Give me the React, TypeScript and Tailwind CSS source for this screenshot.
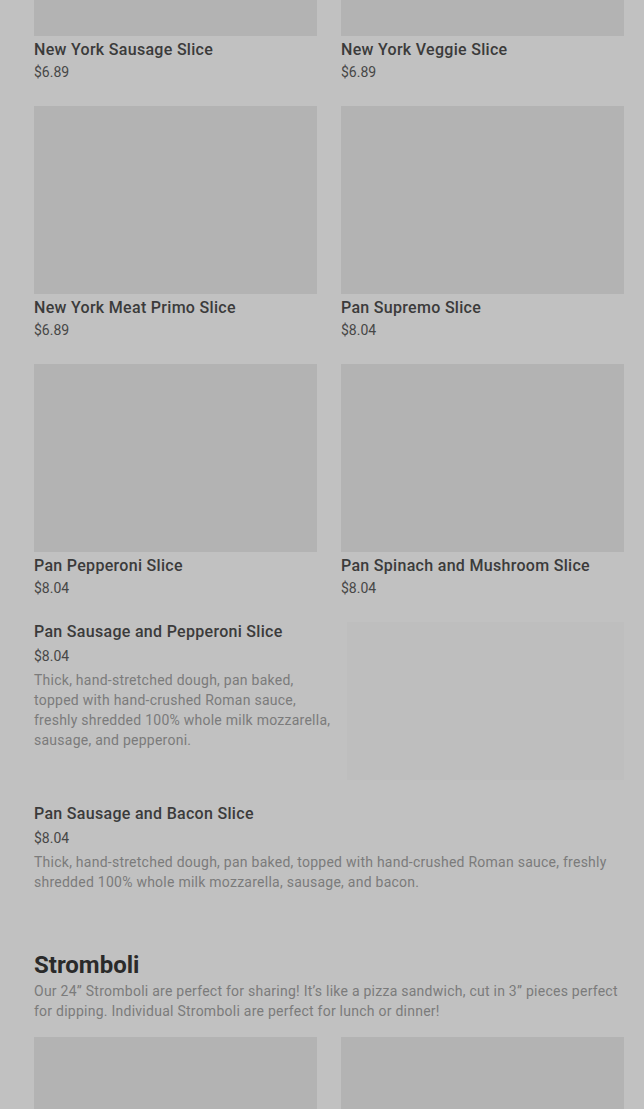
const font = { fontFamily: "Roboto, 'Liberation Sans', sans-serif" };

type Item = { name: string; price: string };

const rows: { items: Item[]; cut?: boolean }[] = [
  {
    cut: true,
    items: [
      { name: "New York Sausage Slice", price: "$6.89" },
      { name: "New York Veggie Slice", price: "$6.89" },
    ],
  },
  {
    items: [
      { name: "New York Meat Primo Slice", price: "$6.89" },
      { name: "Pan Supremo Slice", price: "$8.04" },
    ],
  },
  {
    items: [
      { name: "Pan Pepperoni Slice", price: "$8.04" },
      { name: "Pan Spinach and Mushroom Slice", price: "$8.04" },
    ],
  },
];

function GridCard({ item, cut }: { item: Item; cut?: boolean }) {
  return (
    <div className="flex flex-col">
      <div className={`w-full bg-[#b3b3b3] ${cut ? "h-[36px]" : "h-[188px]"}`} />
      <div className="mt-[2px] text-[16px] font-medium leading-6 tracking-[0.3px] text-[#3b3b3b]">{item.name}</div>
      <div className="text-[14px] leading-5 text-[#474747]">{item.price}</div>
    </div>
  );
}

function ListItem({
  name,
  price,
  desc,
  image,
}: {
  name: string;
  price: string;
  desc: string;
  image?: boolean;
}) {
  return (
    <div className="flex gap-[10px]">
      <div className="flex-1">
        <div className="text-[16px] font-medium leading-6 tracking-[0.3px] text-[#3b3b3b]">{name}</div>
        <div className="mt-[2px] text-[14px] leading-5 text-[#474747]">{price}</div>
        <div className="mt-1 text-[14px] leading-5 tracking-[0.25px] text-[#7b7b7b]">{desc}</div>
      </div>
      {image && <div className="mt-[2px] h-[158px] w-[277px] shrink-0 bg-[#bebebe]" />}
    </div>
  );
}

export default function App() {
  return (
    <div style={font} className="min-h-[1109px] w-full overflow-hidden bg-[#c1c1c1] pl-[34px] pr-[20px]">
      <div className="flex flex-col gap-6">
        {rows.map((row, i) => (
          <div key={i} className="grid grid-cols-2 gap-6">
            {row.items.map((it) => (
              <GridCard key={it.name} item={it} cut={row.cut} />
            ))}
          </div>
        ))}
      </div>

      <div className="mt-[22px] flex flex-col gap-[22px]">
        <ListItem
          image
          name="Pan Sausage and Pepperoni Slice"
          price="$8.04"
          desc="Thick, hand-stretched dough, pan baked, topped with hand-crushed Roman sauce, freshly shredded 100% whole milk mozzarella, sausage, and pepperoni."
        />
        <ListItem
          name="Pan Sausage and Bacon Slice"
          price="$8.04"
          desc="Thick, hand-stretched dough, pan baked, topped with hand-crushed Roman sauce, freshly shredded 100% whole milk mozzarella, sausage, and bacon."
        />
      </div>

      <div className="mt-[57px]">
        <h2 className="text-[24px] font-bold leading-8 text-[#2a2a2a]">Stromboli</h2>
        <p className="text-[14px] leading-5 tracking-[0.25px] text-[#7b7b7b]">
          Our 24” Stromboli are perfect for sharing! It’s like a pizza sandwich, cut in 3” pieces perfect for dipping. Individual Stromboli are perfect for lunch or dinner!
        </p>
        <div className="mt-4 grid grid-cols-2 gap-6">
          <div className="h-[188px] bg-[#b3b3b3]" />
          <div className="h-[188px] bg-[#b3b3b3]" />
        </div>
      </div>
    </div>
  );
}
